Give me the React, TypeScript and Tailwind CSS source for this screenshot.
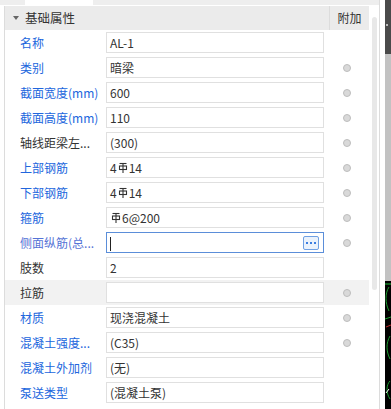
import React from 'react';

// HRB400 rebar grade symbol, drawn as a small icon
const Rebar: React.FC = () => (
  <svg width="10" height="12" viewBox="0 0 10 12" className="inline-block mx-[1px] -mt-[3px] align-middle">
    <g stroke="#333" strokeWidth="1.1" fill="none">
      <line x1="1.5" y1="1.5" x2="8.5" y2="1.5" />
      <rect x="1.5" y="4" width="7" height="3.5" />
      <line x1="5" y1="1.5" x2="5" y2="11" />
    </g>
  </svg>
);

interface Row {
  label: string;
  value: React.ReactNode;
  blue: boolean;
  dot: boolean;
  focus?: boolean;
  shaded?: boolean;
}

const rows: Row[] = [
  { label: '名称', value: 'AL-1', blue: true, dot: false },
  { label: '类别', value: '暗梁', blue: true, dot: true },
  { label: '截面宽度(mm)', value: '600', blue: true, dot: true },
  { label: '截面高度(mm)', value: '110', blue: true, dot: true },
  { label: '轴线距梁左...', value: '(300)', blue: false, dot: true },
  { label: '上部钢筋', value: <>4<Rebar />14</>, blue: true, dot: true },
  { label: '下部钢筋', value: <>4<Rebar />14</>, blue: true, dot: true },
  { label: '箍筋', value: <><Rebar />6@200</>, blue: true, dot: true },
  { label: '侧面纵筋(总...', value: '', blue: true, dot: true, focus: true },
  { label: '肢数', value: '2', blue: false, dot: false },
  { label: '拉筋', value: '', blue: false, dot: true, shaded: true },
  { label: '材质', value: '现浇混凝土', blue: true, dot: true },
  { label: '混凝土强度...', value: '(C35)', blue: true, dot: true },
  { label: '混凝土外加剂', value: '(无)', blue: true, dot: false },
  { label: '泵送类型', value: '(混凝土泵)', blue: true, dot: false },
];

const App: React.FC = () => {
  return (
    <div
      className="w-[391px] h-[409px] overflow-hidden flex bg-white text-[12px] text-[#333]"
      style={{ fontFamily: '"Noto Sans CJK SC", "Noto Sans", sans-serif' }}
    >
      {/* property panel */}
      <div className="w-[380px] flex flex-col border-r border-[#dcdcdc]">
        {/* tab strip */}
        <div className="h-[6px] flex bg-[#eeeeee] border-b border-white">
          <div className="w-[25px]" />
          <div className="w-[68px] bg-white" />
        </div>

        <div className="flex flex-1 min-h-0">
          <div className="w-[365px] ml-[4px] border-l border-[#dcdcdc] flex flex-col">
            {/* group header */}
            <div className="h-[24px] flex bg-[#ebebeb]">
              <div className="flex-1 flex items-center pl-[8px] gap-[6px]">
                <svg width="6" height="4" viewBox="0 0 6 4">
                  <path d="M0 0 H6 L3 4 Z" fill="#666" />
                </svg>
                <span className="text-[12.5px] leading-[16px]">基础属性</span>
              </div>
              <div className="w-[40px] border-l border-[#dcdcdc] flex items-center justify-center leading-[16px]">
                附加
              </div>
            </div>

            {rows.map((r, i) => (
              <div key={i} className={`h-[25px] flex items-center ${r.shaded ? 'bg-[#f2f2f2]' : ''}`}>
                <div
                  className={`w-[101px] pl-[15px] whitespace-nowrap overflow-hidden leading-[16px] ${
                    r.blue ? (r.focus ? 'text-[#5573d6]' : 'text-[#2166dd]') : 'text-[#333]'
                  }`}
                >
                  {r.label}
                </div>
                <div
                  className={`w-[218px] h-[21px] flex items-center pl-[3px] pr-[4px] bg-white border ${
                    r.focus ? 'border-[#5b8ed9]' : 'border-[#e0e0e0]'
                  }`}
                >
                  <span className="flex-1 leading-[16px] whitespace-nowrap">
                    {r.focus ? <span className="inline-block w-px h-[14px] bg-[#222] align-middle" /> : r.value}
                  </span>
                  {r.focus && (
                    <div className="w-[16px] h-[14px] rounded-[2px] border border-[#6fa0e3] bg-[#eaf2fc] flex items-center justify-center gap-[2px]">
                      <span className="w-[2px] h-[2px] bg-[#3b7de0]" />
                      <span className="w-[2px] h-[2px] bg-[#3b7de0]" />
                      <span className="w-[2px] h-[2px] bg-[#3b7de0]" />
                    </div>
                  )}
                </div>
                <div className="flex-1 flex items-center justify-center">
                  {r.dot && <span className="w-[8px] h-[8px] rounded-full bg-[#d9d9d9] border border-[#bdbdbd]" />}
                </div>
              </div>
            ))}
          </div>

          {/* scrollbar */}
          <div className="flex-1 flex justify-center">
            <div className="w-[5px] mt-[11px] h-[273px] rounded-full bg-[#e8e8e8]" />
          </div>
        </div>
      </div>

      {/* drawing area peeking in on the right */}
      <div className="flex-1 flex">
        <div className="w-[5px] bg-white" />
        <div className="flex-1 flex flex-col">
          <div className="h-[54px] bg-[#4a4a4a] flex items-start pt-[24px] pl-[1px]">
            <span className="w-[2px] h-[2px] bg-[#bbbbbb]" />
          </div>
          <div className="h-[227px] bg-[#c2c2c2]" />
          <div className="flex-1 bg-black">
            <svg width="6" height="128" viewBox="0 0 6 128">
              <g fill="none" strokeWidth="1">
                <path d="M0 3 H6" stroke="#1fbf3a" />
                <path d="M4 6 C0 12 0 22 4 30" stroke="#1a9c2e" />
                <path d="M0 38 L6 36" stroke="#1a9c2e" />
                <path d="M1 46 L6 44" stroke="#c0262a" />
                <path d="M5 55 C1 62 1 70 5 78" stroke="#1a9c2e" />
                <path d="M5 100 C1 104 1 112 5 118" stroke="#1a9c2e" />
                <path d="M1 112 L4 108" stroke="#ffffff" />
              </g>
            </svg>
          </div>
        </div>
      </div>
    </div>
  );
};

export default App;
